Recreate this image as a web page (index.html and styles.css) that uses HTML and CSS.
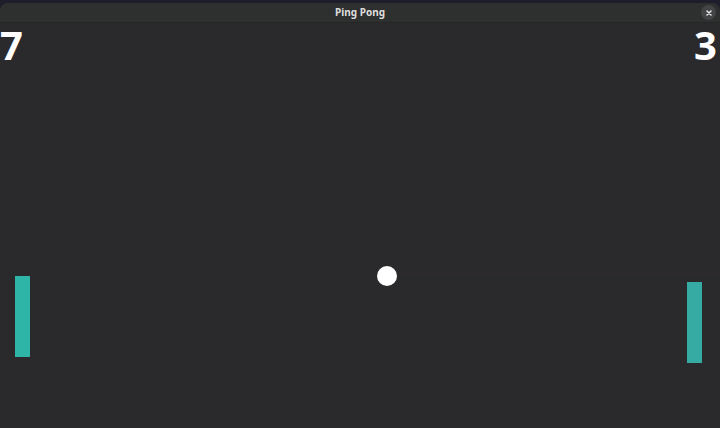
FILE: index.html
```html
<!DOCTYPE html>
<html>
<head>
<meta charset="utf-8">
<link rel="stylesheet" href="styles.css">
</head>
<body>
<div class="window">
  <header class="titlebar">
    <span class="title">Ping Pong</span>
    <button class="close" aria-label="Close">
      <svg width="6" height="6" viewBox="0 0 6 6"><path d="M1 1L5 5M5 1L1 5" stroke="#e8e8e8" stroke-width="1.5" stroke-linecap="round"/></svg>
    </button>
  </header>
  <main class="court">
    <div class="score score-left">7</div>
    <div class="score score-right">3</div>
    <div class="trail"></div>
    <div class="paddle paddle-left"></div>
    <div class="paddle paddle-right"></div>
    <div class="ball"></div>
  </main>
</div>
</body>
</html>
```
FILE: styles.css
```css
html, body {
  margin: 0;
  padding: 0;
  height: 100%;
  background: #1d1d2b;
  overflow: hidden;
}
.window {
  margin-top: 3px;
  height: 425px;
  display: flex;
  flex-direction: column;
  border-radius: 8px 8px 0 0;
  overflow: hidden;
  background: #2a2a2d;
}
.titlebar {
  height: 19px;
  flex: none;
  background: #2e2f2f;
  display: flex;
  align-items: center;
  justify-content: center;
  position: relative;
  border-bottom: 1px solid #262627;
}
.title {
  font-family: "Noto Sans", "Open Sans", sans-serif;
  font-weight: 700;
  font-size: 10px;
  line-height: 12px;
  margin-top: -1px;
  color: #dedede;
}
.close {
  position: absolute;
  right: 4px;
  top: 2px;
  width: 15px;
  height: 15px;
  border: none;
  padding: 0;
  border-radius: 50%;
  background: #434445;
  display: flex;
  align-items: center;
  justify-content: center;
}
.court {
  flex: 1;
  position: relative;
  background: #2a2a2d;
}
.score {
  position: absolute;
  top: -3px;
  font-family: "Noto Sans", "Open Sans", sans-serif;
  font-weight: 700;
  font-size: 40px;
  line-height: 50px;
  color: #ffffff;
}
.score-left { left: 0; }
.score-right { right: 3px; }
.trail {
  position: absolute;
  left: 397px;
  right: 0;
  top: 250px;
  height: 1px;
  background: rgba(120, 50, 50, 0.09);
}
.paddle {
  position: absolute;
  width: 15px;
  height: 81px;
  background: #2fb5a8;
}
.paddle-left { left: 15px; top: 253px; }
.paddle-right { left: 687px; top: 259px; background: #36aba3; }
.ball {
  position: absolute;
  left: 377px;
  top: 243px;
  width: 20px;
  height: 20px;
  border-radius: 50%;
  background: #ffffff;
}
```
